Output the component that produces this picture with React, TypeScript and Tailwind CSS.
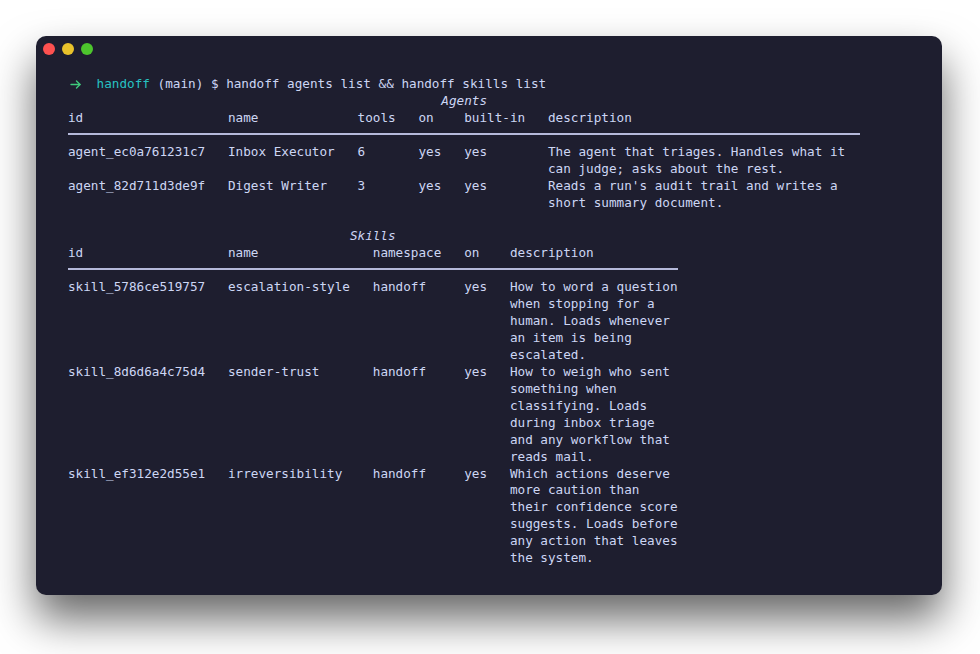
import React from 'react';

type AgentRow = { id: string; name: string; tools: string; on: string; builtIn: string; desc: string[] };
type SkillRow = { id: string; name: string; namespace: string; on: string; desc: string[] };

const agents: AgentRow[] = [
  {
    id: 'agent_ec0a761231c7',
    name: 'Inbox Executor',
    tools: '6',
    on: 'yes',
    builtIn: 'yes',
    desc: ['The agent that triages. Handles what it', 'can judge; asks about the rest.'],
  },
  {
    id: 'agent_82d711d3de9f',
    name: 'Digest Writer',
    tools: '3',
    on: 'yes',
    builtIn: 'yes',
    desc: ["Reads a run's audit trail and writes a", 'short summary document.'],
  },
];

const skills: SkillRow[] = [
  {
    id: 'skill_5786ce519757',
    name: 'escalation-style',
    namespace: 'handoff',
    on: 'yes',
    desc: ['How to word a question', 'when stopping for a', 'human. Loads whenever', 'an item is being', 'escalated.'],
  },
  {
    id: 'skill_8d6d6a4c75d4',
    name: 'sender-trust',
    namespace: 'handoff',
    on: 'yes',
    desc: ['How to weigh who sent', 'something when', 'classifying. Loads', 'during inbox triage', 'and any workflow that', 'reads mail.'],
  },
  {
    id: 'skill_ef312e2d55e1',
    name: 'irreversibility',
    namespace: 'handoff',
    on: 'yes',
    desc: ['Which actions deserve', 'more caution than', 'their confidence score', 'suggests. Loads before', 'any action that leaves', 'the system.'],
  },
];

function Lines({ lines }: { lines: string[] }) {
  return (
    <div>
      {lines.map((l) => (
        <div key={l} className="whitespace-pre">
          {l}
        </div>
      ))}
    </div>
  );
}

export default function App() {
  return (
    <div className="w-[980px] h-[654px] bg-white pt-[36px] pl-[36px]">
      <div className="w-[906px] h-[559px] rounded-[10px] bg-[#1e1e2f] shadow-[0_24px_44px_rgba(0,0,0,0.6)] text-[#cdd6f4] font-['DejaVu_Sans_Mono',monospace] text-[12.66px] leading-[16.93px]">
        {/* title bar */}
        <div className="flex gap-[7px] pt-[7px] pl-[7px]">
          <span className="w-3 h-3 rounded-full bg-[#fe5150]" />
          <span className="w-3 h-3 rounded-full bg-[#e9c22b]" />
          <span className="w-3 h-3 rounded-full bg-[#4dc52d]" />
        </div>

        <div className="pl-[32px] pt-[21px]">
          {/* prompt */}
          <div className="flex items-center whitespace-pre">
            <span className="flex w-[28.6px] pl-[2px]">
              <svg width="11" height="9" viewBox="0 0 11 9" fill="none" stroke="#3fcb7c" strokeWidth="1.4" strokeLinecap="round" strokeLinejoin="round">
                <path d="M1 4.5H10" />
                <path d="M6.5 1L10 4.5L6.5 8" />
              </svg>
            </span>
            <span className="text-[#27c2c2]">handoff</span>
            <span> (main) $ handoff agents list &amp;&amp; handoff skills list</span>
          </div>

          {/* Agents table */}
          <div className="w-fit">
            <div className="text-center italic">Agents</div>
            <div className="grid grid-cols-[21ch_17ch_8ch_6ch_11ch_41ch]">
              <div>id</div>
              <div>name</div>
              <div>tools</div>
              <div>on</div>
              <div>built-in</div>
              <div>description</div>
            </div>
            <div className="h-[16.93px] pt-[6px]">
              <div className="h-[2px] bg-[#b5b9da]" />
            </div>
            {agents.map((a) => (
              <div key={a.id} className="grid grid-cols-[21ch_17ch_8ch_6ch_11ch_41ch]">
                <div>{a.id}</div>
                <div>{a.name}</div>
                <div>{a.tools}</div>
                <div>{a.on}</div>
                <div>{a.builtIn}</div>
                <Lines lines={a.desc} />
              </div>
            ))}
          </div>

          <div className="h-[16.93px]" />

          {/* Skills table */}
          <div className="w-fit">
            <div className="text-center italic">Skills</div>
            <div className="grid grid-cols-[21ch_19ch_12ch_6ch_22ch]">
              <div>id</div>
              <div>name</div>
              <div>namespace</div>
              <div>on</div>
              <div>description</div>
            </div>
            <div className="h-[16.93px] pt-[6px]">
              <div className="h-[2px] bg-[#b5b9da]" />
            </div>
            {skills.map((s) => (
              <div key={s.id} className="grid grid-cols-[21ch_19ch_12ch_6ch_22ch]">
                <div>{s.id}</div>
                <div>{s.name}</div>
                <div>{s.namespace}</div>
                <div>{s.on}</div>
                <Lines lines={s.desc} />
              </div>
            ))}
          </div>
        </div>
      </div>
    </div>
  );
}
